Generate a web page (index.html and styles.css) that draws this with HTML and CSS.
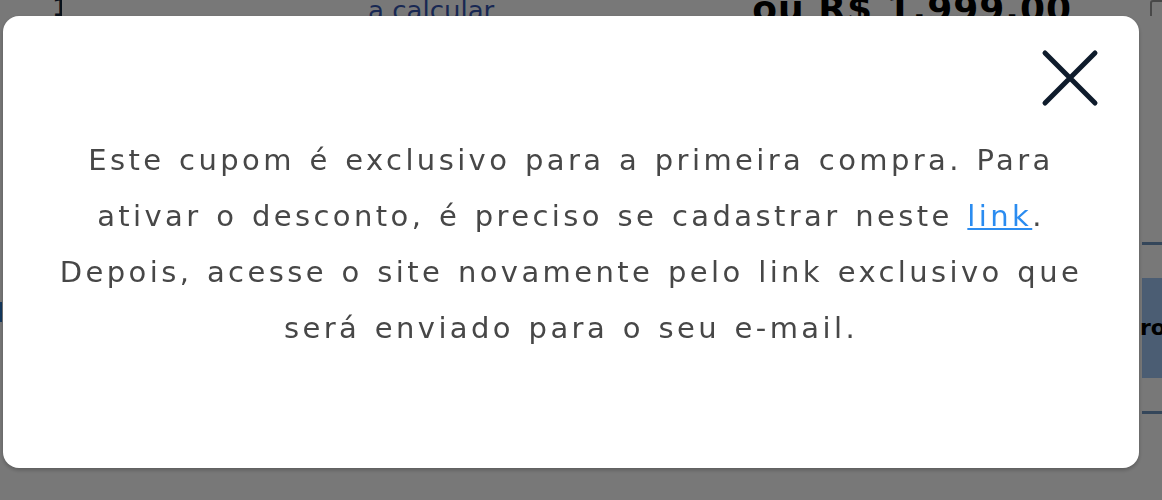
FILE: index.html
```html
<!DOCTYPE html>
<html lang="pt-BR">
<head>
    <meta charset="UTF-8">
    <meta name="viewport" content="width=device-width, initial-scale=1.0">
    <title>Cupom</title>
    <link rel="stylesheet" href="styles.css">
</head>
<body>
    <div class="page">
        <div class="top-row">
            <span class="qty">1</span>
            <span class="shipping">a calcular</span>
            <span class="price">ou R$ 1.999,00</span>
            <span class="corner-box"></span>
        </div>
        <div class="side-row">
            <span class="side-left"></span>
            <div class="side-right">
                <div class="band">ro</div>
            </div>
        </div>
    </div>

    <div class="overlay"></div>

    <div class="modal">
        <button class="close" aria-label="Fechar">
            <svg width="58" height="58" viewBox="0 0 58 58">
                <path d="M4 4 L54 54 M54 4 L4 54" stroke="#0f1c2c" stroke-width="5" stroke-linecap="round" fill="none"/>
            </svg>
        </button>
        <p class="message">
            Este cupom é exclusivo para a primeira compra. Para<br>
            ativar o desconto, é preciso se cadastrar neste <a href="#">link</a>.<br>
            Depois, acesse o site novamente pelo link exclusivo que<br>
            será enviado para o seu e-mail.
        </p>
    </div>
</body>
</html>
```

FILE: styles.css
```css
body{
    margin: 0;
    padding: 0;
    background-color: #ffffff;
    font-family: "DejaVu Sans", "Open Sans", sans-serif;
    height: 500px;
    overflow: hidden;
}

.page{
    height: 500px;
}

.top-row{
    display: flex;
    align-items: flex-end;
    height: 16px;
    overflow: hidden;
}
.qty{
    margin-left: 52px;
    font-size: 26px;
    font-weight: bold;
    color: #10243a;
    line-height: 16px;
    width: 10px;
    overflow: hidden;
}
.shipping{
    margin-left: 306px;
    font-size: 26px;
    color: #3455b0;
    line-height: 10px;
}
.price{
    margin-left: 258px;
    font-size: 36px;
    font-weight: bold;
    color: #000000;
    line-height: 18px;
    height: 16px;
    letter-spacing: 1px;
}
.corner-box{
    margin-left: auto;
    width: 14px;
    height: 18px;
    border: 2px solid #999999;
    border-radius: 3px;
    margin-right: -6px;
    align-self: flex-start;
}

.side-row{
    display: flex;
    justify-content: space-between;
    margin-top: 226px;
}
.side-left{
    width: 2px;
    height: 20px;
    margin-top: 60px;
    background-color: #2a78c8;
}
.side-right{
    width: 20px;
    border-top: 3px solid #6f95c0;
    border-bottom: 3px solid #6f95c0;
    padding: 33px 0;
}
.band{
    height: 100px;
    background-color: #9fc5f5;
    font-size: 22px;
    font-weight: bold;
    line-height: 100px;
    color: #000;
    text-indent: -2px;
}

.overlay{
    position: fixed;
    top: 0;
    left: 0;
    right: 0;
    bottom: 0;
    background-color: rgba(0, 0, 0, 0.53);
}

.modal{
    position: fixed;
    top: 16px;
    left: 3px;
    width: 1136px;
    height: 452px;
    background-color: #ffffff;
    border-radius: 16px;
    box-shadow: 0 2px 4px rgba(0, 0, 0, 0.25);
    box-sizing: border-box;
    padding: 116px 20px 0;
}

.close{
    position: absolute;
    top: 33px;
    right: 40px;
    background: none;
    border: none;
    padding: 0;
    cursor: pointer;
}

.message{
    margin: 0;
    text-align: center;
    font-size: 29px;
    line-height: 56px;
    letter-spacing: 3.4px;
    word-spacing: 2px;
    color: #474747;
}
.message a{
    color: #2b8cf0;
}
```
